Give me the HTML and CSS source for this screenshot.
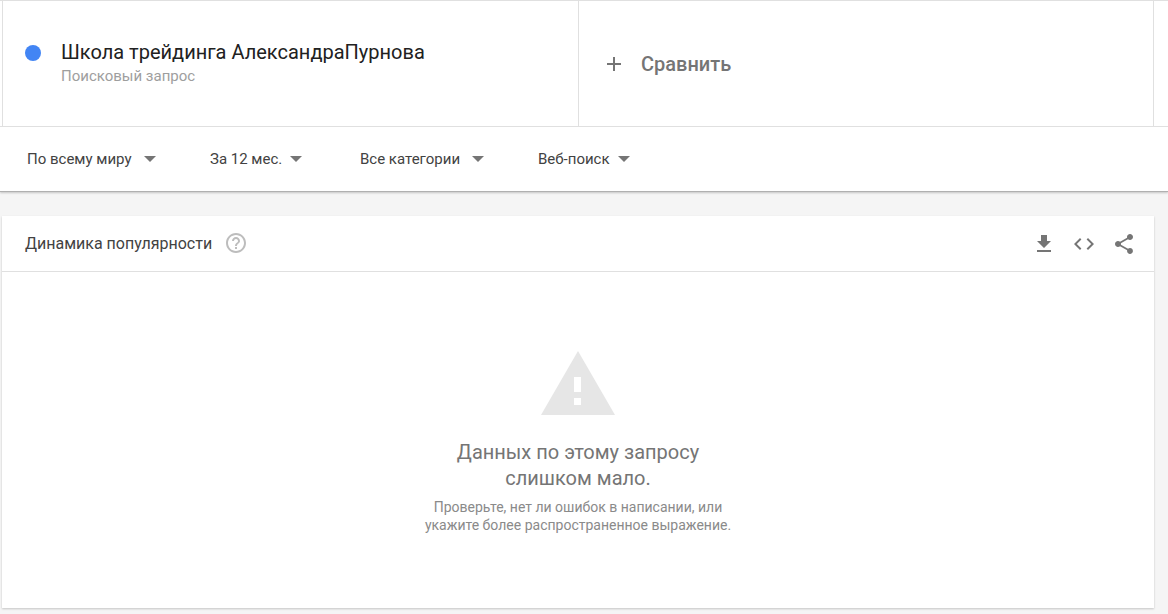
FILE: index.html
```html
<!DOCTYPE html>
<html lang="ru">
<head>
    <meta charset="UTF-8">
    <meta name="viewport" content="width=device-width, initial-scale=1">
    <title>Динамика популярности</title>
    <link rel="stylesheet" href="styles.css">
</head>
<body>

    <header class="top">
        <div class="terms">
            <div class="term">
                <span class="dot"></span>
                <div>
                    <h1 class="term-name">Школа трейдинга АлександраПурнова</h1>
                    <p class="term-type">Поисковый запрос</p>
                </div>
            </div>
            <button class="compare" type="button">
                <svg class="plus" viewBox="0 0 14 14"><path d="M7 0v14M0 7h14"/></svg>
                Сравнить
            </button>
        </div>

        <form class="filters">
            <div class="filter">
                <select aria-label="Регион"><option>По всему миру</option></select>
                <span class="arrow"></span>
            </div>
            <div class="filter filter-tight">
                <select aria-label="Период"><option>За 12 мес.</option></select>
                <span class="arrow"></span>
            </div>
            <div class="filter">
                <select aria-label="Категория"><option>Все категории</option></select>
                <span class="arrow"></span>
            </div>
            <div class="filter filter-tight">
                <select aria-label="Тип поиска"><option>Веб-поиск</option></select>
                <span class="arrow"></span>
            </div>
        </form>
    </header>

    <main class="card">
        <div class="card-head">
            <h2 class="card-title">Динамика популярности</h2>
            <button class="icon help" type="button" aria-label="Справка">
                <svg viewBox="0 0 24 24"><path d="M11 18h2v-2h-2v2zm1-16C6.48 2 2 6.48 2 12s4.480 10 10 10 10-4.480 10-10S17.520 2 12 2zm0 18c-4.410 0-8-3.590-8-8s3.590-8 8-8 8 3.590 8 8-3.590 8-8 8zm0-14c-2.210 0-4 1.790-4 4h2c0-1.100.9-2 2-2s2 .9 2 2c0 2-3 1.750-3 5h2c0-2.250 3-2.500 3-5 0-2.210-1.790-4-4-4z"/></svg>
            </button>
            <div class="actions">
                <button class="icon" type="button" aria-label="Скачать">
                    <svg viewBox="0 0 24 24"><path d="M19 9h-4V3H9v6H5l7 7 7-7zM5 18v2h14v-2H5z"/></svg>
                </button>
                <button class="icon" type="button" aria-label="Встроить">
                    <svg viewBox="0 0 24 24"><path d="M9.400 16.600L4.800 12l4.600-4.600L8 6l-6 6 6 6 1.400-1.400zm5.200 0l4.600-4.600-4.600-4.600L16 6l6 6-6 6-1.400-1.400z"/></svg>
                </button>
                <button class="icon" type="button" aria-label="Поделиться">
                    <svg viewBox="0 0 24 24"><path d="M18 16.080c-.76 0-1.440.3-1.960.77L8.910 12.700c.05-.23.09-.46.09-.7s-.04-.47-.09-.7l7.050-4.110c.54.5 1.250.81 2.040.81 1.660 0 3-1.340 3-3s-1.340-3-3-3-3 1.340-3 3c0 .24.04.47.09.7L8.040 9.810C7.500 9.310 6.790 9 6 9c-1.660 0-3 1.340-3 3s1.340 3 3 3c.79 0 1.500-.31 2.040-.81l7.120 4.160c-.05.21-.08.43-.08.65 0 1.610 1.310 2.920 2.920 2.920s2.920-1.310 2.920-2.920-1.310-2.920-2.920-2.920z"/></svg>
                </button>
            </div>
        </div>

        <div class="empty">
            <svg class="warning" viewBox="0 0 74 64"><path fill-rule="evenodd" d="M37 0L74 64H0zM33 26v15h7V26zM33 47v7h7v-7z"/></svg>
            <p class="empty-title">Данных по этому запросу<br>слишком мало.</p>
            <p class="empty-text">Проверьте, нет ли ошибок в написании, или<br>укажите более распространенное выражение.</p>
        </div>
    </main>

</body>
</html>
```
FILE: styles.css
```css
* {
    box-sizing: border-box;
    padding: 0;
    margin: 0;
}
body {
    background-color: #f5f5f5;
    color: #212121;
    font-family: Roboto, "Liberation Sans", sans-serif;
}
button,
select {
    border: 0;
    background: none;
    font-family: inherit;
    cursor: pointer;
}
svg {
    display: block;
}

/* search terms and filters */
.top {
    background-color: #fff;
    border-top: 1px solid #e0e0e0;
    border-bottom: 1px solid #b0b0b0;
    box-shadow: 0 1px 2px rgba(0, 0, 0, 0.2);
}
.terms {
    display: grid;
    grid-template-columns: 1fr 1fr;
    padding: 0 14px 0 2px;
    border-bottom: 1px solid #e0e0e0;
}
.term,
.compare {
    display: flex;
    min-height: 125px;
    border-left: 1px solid #e0e0e0;
}
.term {
    gap: 20px;
    padding: 37px 22px;
}
.dot {
    width: 16px;
    height: 16px;
    margin-top: 7px;
    border-radius: 50%;
    background-color: #4285f4;
}
.term-name {
    font-size: 20px;
    font-weight: 400;
    line-height: 28px;
}
.term-type {
    color: #9e9e9e;
    font-size: 15px;
    line-height: 20px;
}
.compare {
    align-items: center;
    gap: 20px;
    padding: 0 28px;
    border-right: 1px solid #e0e0e0;
    color: #757575;
    font-size: 20px;
    font-weight: 500;
}
.plus {
    width: 14px;
    height: 14px;
    fill: none;
    stroke: #757575;
    stroke-width: 2;
}
.filters {
    display: grid;
    grid-template-columns: 183px 150px 178px auto;
    align-items: center;
    height: 64px;
    padding-left: 27px;
}
.filter {
    display: flex;
    align-items: center;
    gap: 12px;
}
.filter-tight {
    gap: 8px;
}
.filter select {
    appearance: none;
    field-sizing: content;
    color: #424242;
    font-size: 15px;
    line-height: 20px;
}
.arrow {
    border: 6px solid transparent;
    border-top-color: #757575;
    border-bottom: 0;
    pointer-events: none;
}

/* chart card */
.card {
    margin: 24px 14px 6px 2px;
    background-color: #fff;
    box-shadow: 0 1px 2px rgba(0, 0, 0, 0.2);
}
.card-head {
    display: flex;
    align-items: center;
    height: 56px;
    padding: 0 18px 0 23px;
    border-bottom: 1px solid #e0e0e0;
}
.card-title {
    color: #424242;
    font-size: 16px;
    font-weight: 400;
}
.icon svg {
    width: 24px;
    height: 24px;
    fill: #757575;
}
.help {
    margin: 0 12px 2px;
}
.help svg {
    fill: #bdbdbd;
}
.actions {
    display: flex;
    gap: 16px;
    margin-left: auto;
}
.empty {
    display: flex;
    flex-direction: column;
    align-items: center;
    padding: 79px 24px 74px;
    color: #757575;
    text-align: center;
}
.warning {
    width: 74px;
    height: 64px;
    fill: #e6e6e6;
}
.empty-title {
    margin: 24px 0 7px;
    font-size: 20px;
    line-height: 26px;
}
.empty-text {
    color: #8a8a8a;
    font-size: 14px;
    line-height: 18px;
}
```
